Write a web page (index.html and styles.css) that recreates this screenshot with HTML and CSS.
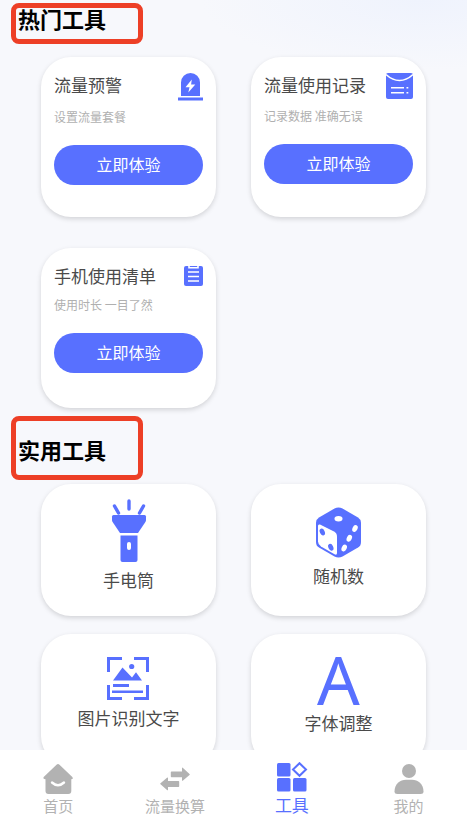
FILE: index.html
```html
<!DOCTYPE html>
<html lang="zh-CN">
<head>
<meta charset="utf-8">
<meta name="viewport" content="width=device-width, initial-scale=1">
<title>工具</title>
<link rel="stylesheet" href="styles.css">
</head>
<body>
<main class="content">
  <section>
    <h2 class="heading">热门工具</h2>
    <div class="grid grid-hot">
      <article class="card">
        <header class="card-head">
          <h3 class="card-title">流量预警</h3>
          <svg width="25" height="28" viewBox="0 0 25 28" aria-hidden="true">
            <path class="fill" d="M3 23V9.500a9.500 9.500 0 0 1 19 0V23zM0 24.500h25V27.500H0z"/>
            <path class="paper" d="M13.800 6.500 7.500 14.200h4l-1.200 5.300 7-8h-4.200z"/>
          </svg>
        </header>
        <p class="card-note">设置流量套餐</p>
        <button class="action" type="button">立即体验</button>
      </article>
      <article class="card">
        <header class="card-head">
          <h3 class="card-title">流量使用记录</h3>
          <svg width="27" height="27" viewBox="0 0 27 27" aria-hidden="true">
            <rect class="fill" y="0" width="27" height="26" rx="2"/>
            <path class="line-paper" d="M0 1.500C8.500 9.500 18.500 9.500 27 1.500M5 14.700h13M5 19.700h13M20.500 14.700h1.800M20.500 19.700h1.800"/>
          </svg>
        </header>
        <p class="card-note">记录数据 准确无误</p>
        <button class="action" type="button">立即体验</button>
      </article>
      <article class="card">
        <header class="card-head">
          <h3 class="card-title">手机使用清单</h3>
          <svg width="19" height="25" viewBox="0 0 19 25" aria-hidden="true">
            <rect class="fill" y="2" width="19" height="20" rx="2"/>
            <path class="line-paper" d="M5 2v1.800h9V2M4 8h11M4 12.500h11M4 17h11"/>
            <path class="fill" d="M6 2h7v1H6z"/>
          </svg>
        </header>
        <p class="card-note">使用时长 一目了然</p>
        <button class="action" type="button">立即体验</button>
      </article>
    </div>
  </section>

  <section>
    <h2 class="heading heading-roomy">实用工具</h2>
    <div class="grid grid-tools">
      <button class="card tool tool-tall" type="button">
        <svg width="36" height="63" viewBox="0 0 36 63" aria-hidden="true">
          <path class="ray" d="M18 2v8M3.500 7l4 7M32.500 7l-4 7"/>
          <path class="fill" d="M2.500 16h31q1.500 0 1.500 1.500V21q0 1-.6 2L27 34H9L1.600 23Q1 22 1 21v-3.500Q1 16 2.500 16z"/>
          <path class="fill" d="M9.500 36.500h17V61q0 2-2 2h-13q-2 0-2-2z"/>
          <rect class="paper" x="16" y="43" width="4" height="8" rx="2"/>
        </svg>
        <span>手电筒</span>
      </button>
      <button class="card tool" type="button">
        <svg width="45" height="51" viewBox="0 0 45 51" aria-hidden="true">
          <path class="fill" d="M18.500 1.600q4-2 8 0L42 10.500q3 2 3 5V35q0 3.500-3 5.500L26.500 49.600q-4 2-8 0L3 40.500Q0 38.500 0 35V15.500q0-3 3-5z"/>
          <path class="paper" d="M4 17.600 18 24.500q3 1.600 3 5V46q0 2.500-2.500 1.300L5 39.500q-3-2-3-5V19q0-2.200 2-1.400z"/>
          <ellipse class="paper" cx="22.500" cy="11.800" rx="4" ry="2.700"/>
          <ellipse class="paper" cx="39" cy="21.500" rx="2.500" ry="3.600" transform="rotate(25 39 21.500)"/>
          <ellipse class="paper" cx="33.300" cy="31.300" rx="2.500" ry="3.600" transform="rotate(25 33.300 31.300)"/>
          <ellipse class="paper" cx="28.200" cy="41" rx="2.500" ry="3.600" transform="rotate(25 28.200 41)"/>
          <ellipse class="fill" cx="6.300" cy="25" rx="2.400" ry="3.600" transform="rotate(-25 6.300 25)"/>
          <ellipse class="fill" cx="14.800" cy="40.300" rx="2.400" ry="3.600" transform="rotate(-25 14.800 40.300)"/>
        </svg>
        <span>随机数</span>
      </button>
      <button class="card tool" type="button">
        <svg width="43" height="43" viewBox="0 0 43 43" aria-hidden="true">
          <path class="frame" d="M15 1.500H1.500V15M27 1.500h13.500V15M1.500 28v13.500H15M40.500 28v13.500H27"/>
          <path class="fill" d="M6 23.500 15.500 10.500 25 20.500 29 15.300 35 23.500z"/>
          <circle class="fill" cx="24.700" cy="9.500" r="2.600"/>
          <path class="fill" d="M6 27h16v3H6zM5 33.500h31v2.500H5z"/>
        </svg>
        <span>图片识别文字</span>
      </button>
      <button class="card tool" type="button">
        <span class="letter" aria-hidden="true">A</span>
        <span>字体调整</span>
      </button>
    </div>
  </section>
</main>

<nav class="tabs">
  <a class="tab" href="#home">
    <svg width="32" height="32" viewBox="0 0 32 32" aria-hidden="true">
      <path d="M14.500 2.700q1.500-1.400 3 0L30.300 15q1.500 2-1 2.300V29q0 3-3 3H6.500q-3 0-3-3V17.300Q.5 17 1.700 15z"/>
      <path class="smile" d="M10 20.500q6 5.500 12 0"/>
    </svg>
    <span>首页</span>
  </a>
  <a class="tab" href="#convert">
    <svg width="32" height="32" viewBox="0 0 32 32" aria-hidden="true">
      <path d="M12.500 9.500H23V6.200q0-1 1-.3L30.500 12q.7.500 0 1l-6.500 5.500q-1 .7-1-.3v-3H12.500q-.7 0-.7-.7V10.200q0-.7.7-.7z"/>
      <path d="M19.500 19H9v-3q0-1-1-.3L1.500 21.300q-.7.500 0 1L8 28q1 .7 1-.3V25h10.500q.7 0 .7-.7v-4.600q0-.7-.7-.7z"/>
    </svg>
    <span>流量换算</span>
  </a>
  <a class="tab tab-active" href="#tools" aria-current="page">
    <svg width="32" height="32" viewBox="0 0 32 32" aria-hidden="true">
      <rect x="1" y="1" width="13.500" height="13.500" rx="1.500"/>
      <rect x="1" y="16" width="13.500" height="13.500" rx="1.500"/>
      <rect x="17" y="16" width="13.500" height="13.500" rx="1.500"/>
      <path class="diamond" d="M23.500 1.200 30 7.500l-6.500 6.300L17 7.500z"/>
    </svg>
    <span>工具</span>
  </a>
  <a class="tab" href="#me">
    <svg width="32" height="32" viewBox="0 0 32 32" aria-hidden="true">
      <circle cx="16" cy="9" r="7"/>
      <path d="M1.500 29.500C1.500 22 7 17.700 13 17.700h6c6 0 11.500 4.300 11.500 11.800q0 2.500-3 2.500H4.500q-3 0-3-2.500z"/>
    </svg>
    <span>我的</span>
  </a>
</nav>
</body>
</html>
```

FILE: styles.css
```css
:root {
  --blue: #5870ff;
  --red: #ed3f26;
  --ink: #4a4a4a;
  --muted: #b0b0b0;
  --tab: #b2b2b2;
}

* {
  box-sizing: border-box;
  margin: 0;
  padding: 0;
}

body {
  display: flex;
  flex-direction: column;
  height: 100vh;
  background: radial-gradient(ellipse 220px 70px at 90% 0, #eff3fd, #f7f8fc) #f7f8fc;
  color: var(--ink);
  font-family: "Noto Sans CJK SC", sans-serif;
}

button {
  border: 0;
  font: inherit;
  color: inherit;
  cursor: pointer;
}

svg {
  display: block;
  flex: none;
}

.content {
  flex: 1;
  min-height: 0;
  overflow: hidden;
  padding-top: 3px;
}

.heading {
  width: fit-content;
  min-width: 132px;
  margin-left: 11px;
  padding: 0 30px 11px 2px;
  border: 5px solid var(--red);
  border-radius: 8px;
  color: #000;
  font-size: 22px;
  font-weight: 700;
  line-height: 20px;
}

.heading-roomy {
  margin-top: 8px;
  padding-top: 18px;
  padding-bottom: 16px;
}

.grid {
  display: grid;
  grid-template-columns: 1fr 1fr;
  column-gap: 35px;
  padding: 0 41px;
}

.grid-hot {
  margin-top: 13px;
  row-gap: 31px;
}

.grid-tools {
  margin-top: 4px;
  row-gap: 18px;
}

.card {
  min-height: 160px;
  padding: 16px 13px;
  border-radius: 30px;
  background: #fff;
  box-shadow: 0 2px 5px rgba(0, 0, 0, 0.15);
}

.card-head {
  display: flex;
  justify-content: space-between;
  align-items: flex-start;
}

.card-title {
  font-size: 17px;
  font-weight: 400;
  line-height: 24px;
  white-space: nowrap;
}

.card-note {
  margin-top: 8px;
  color: var(--muted);
  font-size: 12px;
  line-height: 16px;
}

.action {
  display: block;
  width: 100%;
  height: 40px;
  margin-top: 20px;
  padding-bottom: 2px;
  border-radius: 20px;
  background: var(--blue);
  color: #fff;
  font-size: 16px;
}

.tool {
  display: flex;
  flex-direction: column;
  align-items: center;
  gap: 5px;
  min-height: 132px;
  padding-top: 23px;
  font-size: 17px;
  line-height: 25px;
}

.tool-tall {
  padding-top: 15px;
}

.letter {
  height: 48px;
  color: var(--blue);
  font-family: "Noto Sans", sans-serif;
  font-size: 67px;
  line-height: 44px;
}

.fill {
  fill: var(--blue);
}

.paper {
  fill: #fff;
}

.line-paper {
  fill: none;
  stroke: #fff;
  stroke-width: 1.6;
}

.ray {
  fill: none;
  stroke: var(--blue);
  stroke-width: 3.4;
  stroke-linecap: round;
}

.frame {
  fill: none;
  stroke: var(--blue);
  stroke-width: 3;
}

.tabs {
  display: grid;
  grid-template-columns: repeat(4, 1fr);
  height: 80px;
  padding-top: 12px;
  background: #fff;
}

.tab {
  display: flex;
  flex-direction: column;
  align-items: center;
  color: var(--tab);
  fill: currentColor;
  font-size: 15px;
  line-height: 24px;
  text-decoration: none;
}

.tab-active {
  color: var(--blue);
  font-size: 17px;
  line-height: 22px;
}

.smile {
  fill: none;
  stroke: #fff;
  stroke-width: 2.4;
  stroke-linecap: round;
}

.diamond {
  fill: none;
  stroke: currentColor;
  stroke-width: 2;
}
```
